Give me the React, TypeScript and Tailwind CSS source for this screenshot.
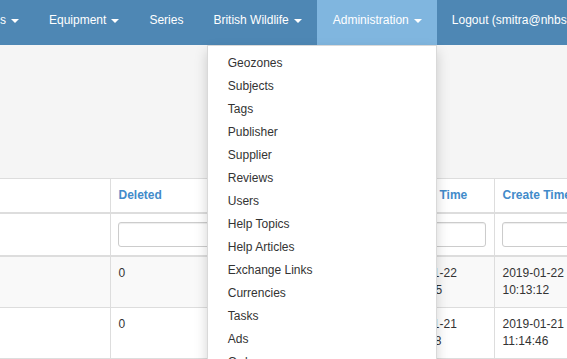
import React from "react";

const navItems = [
    { label: "s", caret: true, first: true },
    { label: "Equipment", caret: true },
    { label: "Series", caret: false },
    { label: "British Wildlife", caret: true },
];

const adminMenu = [
    "Geozones",
    "Subjects",
    "Tags",
    "Publisher",
    "Supplier",
    "Reviews",
    "Users",
    "Help Topics",
    "Help Articles",
    "Exchange Links",
    "Currencies",
    "Tasks",
    "Ads",
    "Orders",
    "Settings",
];

const rows = [
    { id: "", deleted: "0", by: "smitra", updated: "2019-01-22 10:13:15", created: "2019-01-22 10:13:12", striped: true },
    { id: "", deleted: "0", by: "smitra", updated: "2019-01-21 11:14:48", created: "2019-01-21 11:14:46", striped: false },
    { id: "", deleted: "0", by: "smitra", updated: "2019-01-18 09:02:31", created: "2019-01-18 09:02:30", striped: true },
];

function Caret() {
    return <span className="inline-block align-middle ml-[5px] w-0 h-0 border-t-[4px] border-t-white border-x-[4px] border-x-transparent" />;
}

export default function App() {
    return (
        <div className="w-[567px] h-[359px] overflow-hidden bg-[#f5f5f5] text-[12px] text-[#333] font-['Liberation_Sans',Arial,sans-serif]">
            {/* Navbar */}
            <nav className="relative z-20 h-[45px] bg-[#4e87b4] flex whitespace-nowrap text-white">
                {navItems.map((item) => (
                    <div key={item.label} className={`h-[45px] pt-[12px] leading-[17px] pr-[15px] ${item.first ? "pl-0" : "pl-[15px]"}`}>
                        {item.label}
                        {item.caret && <Caret />}
                    </div>
                ))}
                <div className="relative h-[45px] pt-[12px] leading-[17px] pl-[16px] pr-[15px] bg-[#80b6df]">
                    Administration
                    <Caret />
                    {/* Dropdown */}
                    <div className="absolute right-0 top-full w-[230px] bg-white border border-black/15 pt-[6px] pb-[4px] shadow-[0_6px_12px_rgba(0,0,0,0.175)] text-[#333]">
                        {adminMenu.map((m) => (
                            <div key={m} className="h-[23px] leading-[23px] pl-[20px]">
                                {m}
                            </div>
                        ))}
                    </div>
                </div>
                <div className="h-[45px] pt-[12px] leading-[17px] pl-[15px] pr-[15px]">Logout (smitra@nhbs.com)</div>
            </nav>

            {/* Content */}
            <div className="pt-[133px]">
                <table className="table-fixed w-[620px] border-collapse bg-white">
                    <colgroup>
                        <col className="w-[110px]" />
                        <col className="w-[140px]" />
                        <col className="w-[137px]" />
                        <col className="w-[107px]" />
                        <col className="w-[126px]" />
                    </colgroup>
                    <thead>
                        <tr>
                            <th className="border border-[#ddd] border-b-2 border-l-0 px-[8px] py-[8px] leading-[17px] text-left"></th>
                            <th className="border border-[#ddd] border-b-2 px-[8px] py-[8px] leading-[17px] text-left font-bold text-[#428bca]">Deleted</th>
                            <th className="border border-[#ddd] border-b-2 px-[8px] py-[8px] leading-[17px] text-left font-bold text-[#428bca]">Created By</th>
                            <th className="border border-[#ddd] border-b-2 px-[8px] py-[8px] leading-[17px] text-left font-bold text-[#428bca] whitespace-nowrap">Update Time</th>
                            <th className="border border-[#ddd] border-b-2 px-[8px] py-[8px] leading-[17px] text-left font-bold text-[#428bca] whitespace-nowrap">Create Time</th>
                        </tr>
                        <tr>
                            <td className="border border-[#ddd] border-b-2 border-l-0 px-[8px] py-[8px]"></td>
                            {[0, 1, 2, 3].map((i) => (
                                <td key={i} className="border border-[#ddd] border-b-2 pl-[7px] pr-[8px] py-[8px]">
                                    <input className="block w-full h-[25px] border border-[#ccc] rounded-[3px] bg-white shadow-[inset_0_1px_1px_rgba(0,0,0,0.075)]" />
                                </td>
                            ))}
                        </tr>
                    </thead>
                    <tbody>
                        {rows.map((r, i) => (
                            <tr key={i} className={r.striped ? "bg-[#f9f9f9]" : "bg-white"}>
                                <td className="border border-[#ddd] border-l-0 px-[8px] py-[8px] leading-[17px] align-top">{r.id}</td>
                                <td className="border border-[#ddd] px-[8px] py-[8px] leading-[17px] align-top">{r.deleted}</td>
                                <td className="border border-[#ddd] px-[8px] py-[8px] leading-[17px] align-top">{r.by}</td>
                                <td className="border border-[#ddd] px-[8px] py-[8px] leading-[17px] align-top">{r.updated}</td>
                                <td className="border border-[#ddd] px-[8px] py-[8px] leading-[17px] align-top">{r.created}</td>
                            </tr>
                        ))}
                    </tbody>
                </table>
            </div>
        </div>
    );
}
